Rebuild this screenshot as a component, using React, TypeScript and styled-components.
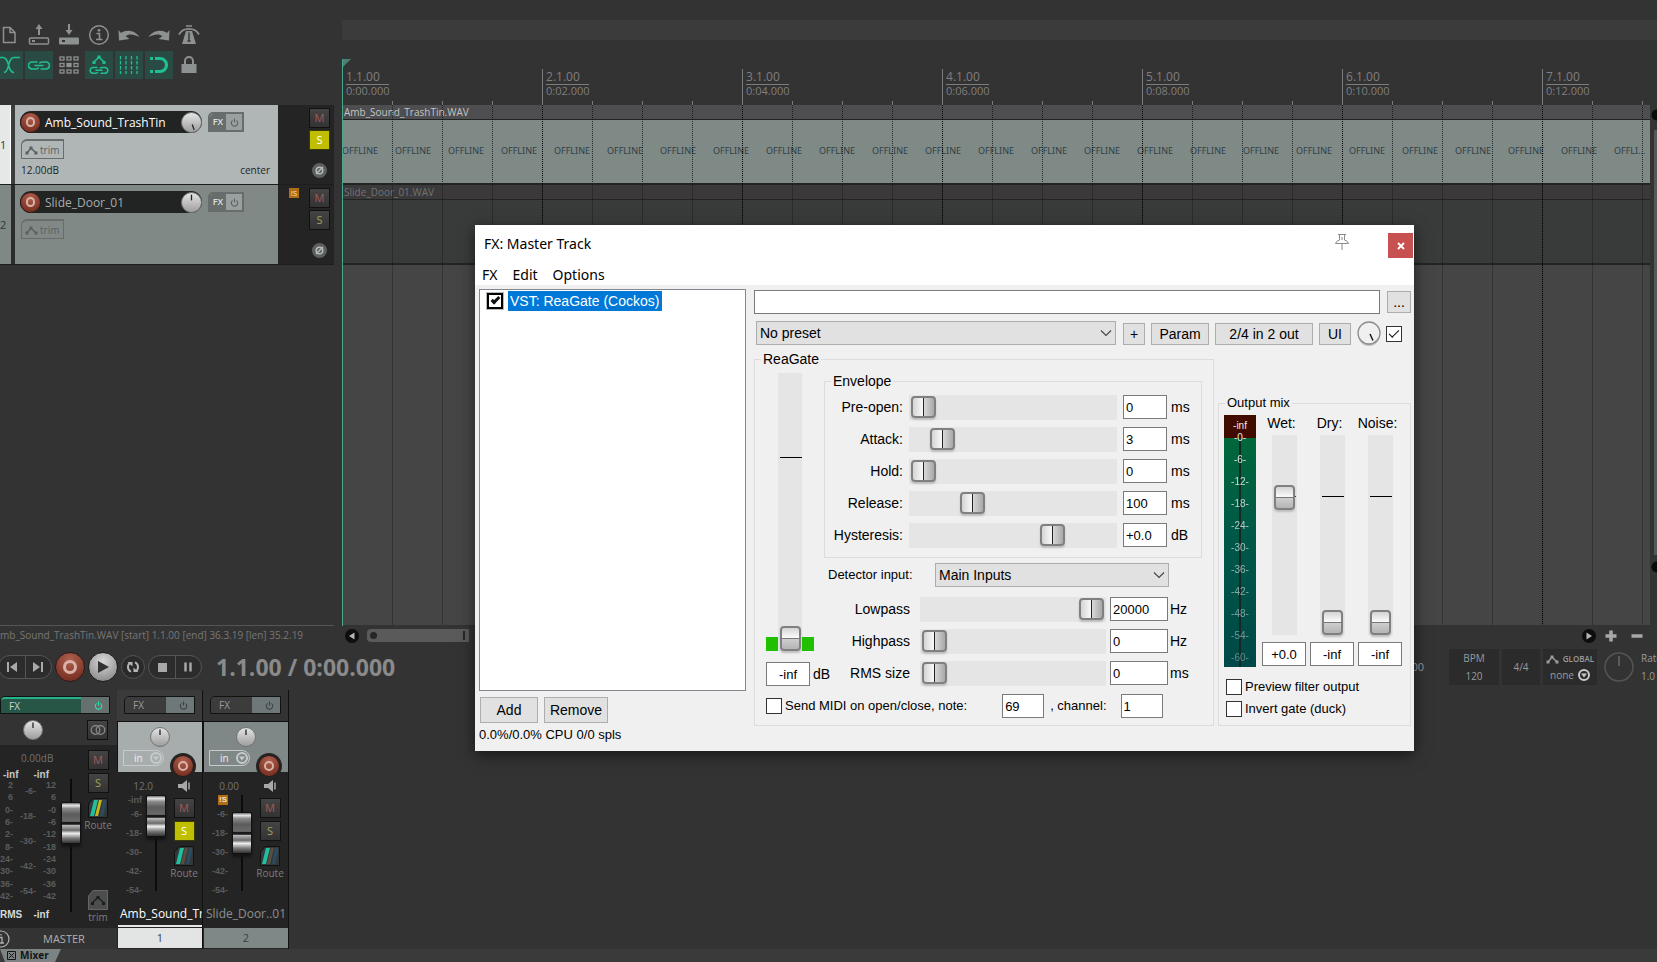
import React from "react";
import styled, { createGlobalStyle, css } from "styled-components";

const GlobalStyle = createGlobalStyle`
  *, *::before, *::after { box-sizing: border-box; }
  html, body { margin: 0; background: #333333; }
  body { font-family: "Open Sans", "Noto Sans", sans-serif; overflow: hidden; }
  button, input, select { font: inherit; margin: 0; padding: 0; border-radius: 0; }
  h1, h2, p, fieldset { margin: 0; }
  svg { display: block; }
`;

/* ---------- page frame ---------- */

const Page = styled.div`
  display: flex;
  flex-direction: column;
  min-height: 100vh;
  overflow: hidden;
  background: #333333;
  color: #8c8c8c;
`;

const Upper = styled.main`
  display: flex;
  flex: 1;
`;

const TrackColumn = styled.section`
  display: flex;
  flex-direction: column;
  width: 334px;
  flex-shrink: 0;
`;

const Toolbar = styled.div`
  display: grid;
  grid-template-columns: repeat(7, 28px);
  gap: 2px;
  padding: 21px 0 26px;
  margin-left: -5px;
`;

const ToolButton = styled.button<{ $on?: boolean }>`
  display: grid;
  place-items: center;
  width: 28px;
  height: 28px;
  border: 0;
  background: ${(p) => (p.$on ? "#2a4b43" : "transparent")};
  color: ${(p) => (p.$on ? "#1fbf93" : "#8e9191")};
`;

/* ---------- track panels ---------- */

const TrackRow = styled.article<{ $selected?: boolean }>`
  display: flex;
  height: 80px;
  border-bottom: 1px solid #1c1e1e;
  background: ${(p) => (p.$selected ? "#a9afae" : "#7f8885")};
  color: ${(p) => (p.$selected ? "#1c1e1e" : "#3b4040")};
`;

const TrackIndex = styled.div<{ $selected?: boolean }>`
  display: flex;
  align-items: center;
  width: 15px;
  font-size: 11px;
  border-right: 4px solid ${(p) => (p.$selected ? "#3c3e3e" : "#2b2d2d")};
  background: ${(p) => (p.$selected ? "#e6e8e7" : "#7f8885")};
  box-shadow: ${(p) => (p.$selected ? "inset -1px 0 #ffffff" : "none")};
  color: #333737;
`;

const TrackBody = styled.div<{ $selected?: boolean }>`
  display: flex;
  flex-direction: column;
  flex: 1;
  gap: 5px;
  padding: 6px 8px 0 5px;
  background: ${(p) => (p.$selected ? "#b0b6b6" : "#808986")};
`;

const TrackLine = styled.div`
  display: flex;
  align-items: center;
  gap: 6px;
  height: 22px;
`;

const NamePill = styled.div<{ $selected?: boolean }>`
  display: flex;
  align-items: center;
  justify-content: space-between;
  width: 182px;
  height: 22px;
  border-radius: 11px;
  background: #222323;
  font-size: 12px;
  color: ${(p) => (p.$selected ? "#ffffff" : "#a9adac")};
`;

const NameText = styled.span`
  flex: 1;
  padding-left: 4px;
  white-space: nowrap;
`;

const RoundRecord = styled.button<{ $size: number }>`
  display: grid;
  place-items: center;
  flex-shrink: 0;
  width: ${(p) => p.$size}px;
  height: ${(p) => p.$size}px;
  border: 1px solid #2b1b18;
  border-radius: 50%;
  background: radial-gradient(circle at 50% 25%, #b0604e, #7c3325 75%);
  &::after {
    content: "";
    width: 50%;
    height: 50%;
    border: ${(p) => (p.$size > 25 ? 3 : 2)}px solid #d9b3a8;
    border-radius: 50%;
  }
`;

const SplitFx = styled.div<{ $mixer?: boolean }>`
  display: flex;
  height: ${(p) => (p.$mixer ? 18 : 20)}px;
  border: ${(p) => (p.$mixer ? 1 : 2)}px solid ${(p) => (p.$mixer ? "#111212" : "#666d6c")};
  border-top-left-radius: 5px;
`;

const FxButton = styled.button<{ $tone: "light" | "dark" | "green" }>`
  flex: 1;
  border: 0;
  border-top-left-radius: 4px;
  font-size: 10px;
  line-height: 14px;
  ${(p) => p.$tone === "light" && css`background: #666d6c; color: #dfe2e1; font-weight: 600; font-size: 9px;`}
  ${(p) => p.$tone === "dark" && css`background: #3c3c3c; color: #9a9a9a; text-align: left; padding-left: 8px;`}
  ${(p) => p.$tone === "green" && css`background: #275647; color: #c4d8d0; text-align: left; padding-left: 8px; border-top: 2px solid #25b189;`}
`;

const PowerButton = styled.button<{ $tone: "light" | "dark" | "green" }>`
  display: grid;
  place-items: center;
  border: 0;
  width: ${(p) => (p.$tone === "light" ? 16 : 28)}px;
  padding-left: ${(p) => (p.$tone === "light" ? 0 : 7)}px;
  background: ${(p) => (p.$tone === "light" ? "#9aa09f" : p.$tone === "dark" ? "#6f7878" : "#66706e")};
  color: ${(p) => (p.$tone === "light" ? "#5c6362" : p.$tone === "dark" ? "#3c4242" : "#2be0ae")};
`;

const TrimButton = styled.button`
  display: flex;
  align-items: center;
  gap: 2px;
  height: 20px;
  padding: 0 4px 0 3px;
  margin-left: 1px;
  border: 1px solid #666d6c;
  border-top-width: 2px;
  border-top-left-radius: 6px;
  background: transparent;
  color: #5b6160;
  font-size: 10px;
  line-height: 16px;
`;

const TrackReadout = styled.div`
  display: flex;
  justify-content: space-between;
  padding-left: 1px;
  margin-top: -2px;
  font-size: 10px;
  line-height: 14px;
  color: #222525;
`;

const TrackSide = styled.div`
  display: flex;
  justify-content: flex-end;
  gap: 10px;
  width: 56px;
  padding: 3px 4px 0 0;
  background: #242424;
`;

const SideStack = styled.div`
  display: flex;
  flex-direction: column;
  align-items: center;
  gap: 2px;
`;

const MiniButton = styled.button<{ $kind: "mute" | "solo" | "soloOn" | "plain" }>`
  display: grid;
  place-items: center;
  width: 21px;
  height: 20px;
  border: 1px solid #111111;
  font-size: 11px;
  line-height: 14px;
  background: linear-gradient(#444444, #333333);
  color: #8d8d8d;
  ${(p) => p.$kind === "mute" && css`color: #a05a5a;`}
  ${(p) => p.$kind === "solo" && css`color: #9fa15a;`}
  ${(p) => p.$kind === "soloOn" && css`background: #bfbf00; color: #ffffff; border-color: #3a3a08;`}
`;

const PhaseButton = styled.button`
  display: grid;
  place-items: center;
  width: 15px;
  height: 15px;
  margin-top: 11px;
  border: 0;
  border-radius: 50%;
  background: #5d5f5f;
  color: #b9bcbc;
`;

const SoloBadge = styled.span`
  width: 10px;
  height: 10px;
  background: #b06c14;
  color: #f5e3c8;
  font-size: 8px;
  line-height: 10px;
  text-align: center;
`;

const StatusLine = styled.p`
  margin-top: auto;
  height: 21px;
  border-top: 1px solid #555555;
  font-size: 10px;
  line-height: 19px;
  white-space: nowrap;
  color: #777777;
`;

/* ---------- arrange view ---------- */

const ArrangeColumn = styled.section`
  position: relative;
  display: flex;
  flex-direction: column;
  flex: 1;
  min-width: 0;
  margin-left: 8px;
  padding-top: 20px;
`;

const RegionBar = styled.div`
  height: 20px;
  background: #3b3b3b;
`;

const Ruler = styled.div`
  display: flex;
  overflow: hidden;
  height: 65px;
  padding-top: 29px;
  background: repeating-linear-gradient(90deg, #7c7c7c 0 1px, transparent 1px 50px) bottom / 100% 4px no-repeat;
`;

const RulerCell = styled.div`
  flex: 0 0 200px;
  padding: 1px 0 0 3px;
  border-left: 1px solid #7c7c7c;
  color: #7f7f7f;
`;

const BarLabel = styled.div`
  width: 43px;
  border-bottom: 1px solid #7c7c7c;
  font-size: 12px;
  line-height: 14px;
`;

const TimeLabel = styled.div`
  font-size: 11px;
  line-height: 11px;
`;

const ArrangeRow = styled.div`
  display: flex;
  flex: 1;
`;

const Canvas = styled.div`
  position: relative;
  flex: 1;
  min-width: 0;
  overflow: hidden;
  background: #454545;
`;

const dotted = css`
  mask-image: repeating-linear-gradient(#000 0 1px, transparent 1px 2px);
`;

const BeatLines = styled.div<{ $dotted?: boolean }>`
  position: absolute;
  inset: ${(p) => (p.$dotted ? "0 0 auto" : "80px 0 0")};
  height: ${(p) => (p.$dotted ? "78px" : "auto")};
  pointer-events: none;
  background: repeating-linear-gradient(90deg, ${(p) => (p.$dotted ? "rgba(10, 14, 14, 0.75)" : "rgba(10, 14, 14, 0.32)")} 0 1px, transparent 1px 50px);
  ${(p) => p.$dotted && dotted}
`;

const BarLines = styled.div`
  position: absolute;
  inset: 0;
  pointer-events: none;
  background: repeating-linear-gradient(90deg, #050505 0 1px, transparent 1px 200px);
  ${dotted}
`;

const Clip = styled.div<{ $muted?: boolean }>`
  height: 80px;
  border-bottom: 2px solid #222424;
  background: ${(p) => (p.$muted ? "#383b3a" : "#7f8986")};
  color: ${(p) => (p.$muted ? "#717373" : "#c3c5c5")};
`;

const ClipTitle = styled.div<{ $muted?: boolean }>`
  height: 15px;
  padding-left: 2px;
  border-bottom: 1px solid #222424;
  background: ${(p) => (p.$muted ? "#3b393a" : "#4e4d4f")};
  font-size: 10px;
  line-height: 14px;
`;

const OfflineRow = styled.div`
  display: flex;
  height: 60px;
  align-items: center;
  font-family: "Noto Sans", sans-serif;
  font-size: 9px;
  color: #2f4045;
`;

const OfflineCell = styled.span`
  flex: 0 0 53px;
`;

const PlayCursor = styled.div`
  position: absolute;
  left: 0;
  top: 59px;
  bottom: 20px;
  border-left: 1px solid #48a890;
  &::before {
    content: "";
    position: absolute;
    left: 0;
    top: 0;
    border-top: 8px solid #4c7f73;
    border-right: 8px solid transparent;
  }
`;

const VScroll = styled.div`
  width: 7px;
  padding: 25px 0 70px 4px;
  background:
    radial-gradient(circle at 7px 10px, #0a0a0a 5px, transparent 6px),
    radial-gradient(circle at 7px calc(100% - 58px), #0a0a0a 5px, transparent 6px),
    #333333;
  &::before {
    content: "";
    display: block;
    height: 100%;
    background: #575757;
  }
`;

const HScroll = styled.div`
  display: flex;
  align-items: center;
  gap: 8px;
  height: 21px;
  padding: 0 13px 0 3px;
  color: #a8a8a8;
`;

const ScrollButton = styled.button`
  display: grid;
  place-items: center;
  width: 14px;
  height: 14px;
  border: 0;
  border-radius: 50%;
  background: #0d0d0d;
  color: #b5b5b5;
`;

const PlainButton = styled.button<{ $apart?: boolean }>`
  display: grid;
  place-items: center;
  width: 14px;
  height: 14px;
  margin-left: ${(p) => (p.$apart ? 4 : 0)}px;
  border: 0;
  background: transparent;
  color: #a8a8a8;
`;

const ScrollThumb = styled.div`
  display: flex;
  align-items: center;
  justify-content: space-between;
  width: 102px;
  height: 13px;
  margin-right: auto;
  padding: 0 4px 0 3px;
  border-radius: 4px 0 0 4px;
  background: #5a5a5a;
  &::before { content: ""; width: 7px; height: 7px; border-radius: 50%; background: #262626; }
  &::after { content: ""; width: 2px; height: 9px; background: #262626; }
`;

/* ---------- transport ---------- */

const Transport = styled.section`
  display: flex;
  align-items: center;
  gap: 3px;
  height: 44px;
  padding-bottom: 3px;
`;

const Pill = styled.div<{ $cut?: boolean }>`
  display: flex;
  height: 24px;
  width: 54px;
  margin-left: ${(p) => (p.$cut ? -2 : 0)}px;
  border: 1px solid #555555;
  border-radius: 12px;
  background: #2c2c2c;
`;

const PillButton = styled.button`
  display: grid;
  place-items: center;
  flex: 1;
  border: 0;
  background: transparent;
  color: #a9a9a9;
  & + & { border-left: 1px solid #555555; }
`;

const PlayButton = styled.button`
  display: grid;
  place-items: center;
  width: 30px;
  height: 30px;
  border: 1px solid #1d1d1d;
  border-radius: 50%;
  background: radial-gradient(circle at 50% 30%, #d9d9d9, #8f8f8f 80%);
  color: #333333;
`;

const LoopButton = styled.button`
  display: grid;
  place-items: center;
  width: 24px;
  height: 24px;
  border: 1px solid #555555;
  border-radius: 50%;
  background: #2a2a2a;
  color: #b5b5b5;
`;

const TimeDisplay = styled.output`
  margin-left: 11px;
  font-size: 23px;
  font-weight: 700;
  line-height: 30px;
  white-space: nowrap;
  color: #8a8a8a;
`;

const TransportEnd = styled.div`
  display: flex;
  align-items: center;
  gap: 3px;
  margin-left: auto;
  font-size: 11px;
  line-height: 18px;
  color: #9a9a9a;
`;

const InfoBox = styled.div<{ $width: number }>`
  display: flex;
  flex-direction: column;
  align-items: center;
  justify-content: center;
  width: ${(p) => p.$width}px;
  height: 36px;
  background: #2b2b2b;
  font-size: 10px;
`;

const Inline = styled.span`
  display: flex;
  align-items: center;
  gap: 4px;
  line-height: 16px;
  white-space: nowrap;
`;

const GlobalLabel = styled.span`
  font-size: 8px;
  font-weight: 600;
`;

const RateKnob = styled.div`
  display: grid;
  place-items: center;
  width: 38px;
`;

const RateText = styled.div`
  display: flex;
  flex-direction: column;
  width: 16px;
  overflow: hidden;
  font-size: 10px;
`;

const ClippedLabel = styled.span`
  margin-right: 22px;
`;

/* ---------- mixer ---------- */

const Mixer = styled.section`
  display: flex;
  height: 259px;
`;

const Strip = styled.article<{ $wide?: boolean }>`
  display: flex;
  flex-direction: column;
  width: ${(p) => (p.$wide ? 117 : 86)}px;
  background: #242424;
  border-right: ${(p) => (p.$wide ? 0 : 1)}px solid #111111;
`;

const StripTop = styled.div<{ $master?: boolean; $selected?: boolean }>`
  height: 31px;
  padding: 6px 7px 0 ${(p) => (p.$master ? 0 : 7)}px;
  background: ${(p) => (p.$selected ? "#3b3b3b" : "#333333")};
`;

const StripHead = styled.div<{ $selected?: boolean }>`
  position: relative;
  display: flex;
  flex-direction: column;
  align-items: center;
  gap: 3px;
  height: 51px;
  padding: 5px 5px 0;
  border-top: 1px solid #111111;
  border-left: 1px solid #111111;
  background: ${(p) => (p.$selected ? "#a7adad" : "#7f8886")};
`;

const InputPick = styled.button`
  display: flex;
  align-items: center;
  justify-content: space-between;
  align-self: flex-start;
  width: 41px;
  height: 16px;
  padding: 0 1px 0 10px;
  border: 1px solid #c6caca;
  border-radius: 0 8px 8px 0;
  background: transparent;
  font-size: 10px;
  line-height: 13px;
  color: #eef0f0;
`;

const ArmSeat = styled.div`
  position: absolute;
  right: 6px;
  bottom: -7px;
  width: 26px;
  height: 26px;
  padding: 2px;
  border-radius: 50%;
  background: #242424;
`;

const StripMain = styled.div`
  display: grid;
  grid-template-columns: 29px 28px 20px;
  flex: 1;
  padding-top: 5px;
`;

const ScaleColumn = styled.div`
  display: flex;
  flex-direction: column;
  align-items: flex-end;
  padding-right: 4px;
  font-family: "Liberation Sans", sans-serif;
  font-size: 9px;
  font-weight: 700;
  line-height: 19px;
  color: #5a5c5c;
`;

const Volume = styled.span`
  width: 36px;
  margin-right: -11px;
  font-family: "Open Sans", sans-serif;
  font-size: 10px;
  font-weight: 400;
  line-height: 18px;
  text-align: right;
  color: #707272;
`;

const ScaleTop = styled.span`
  display: flex;
  align-items: center;
  height: 10px;
  line-height: 10px;
`;

const FaderColumn = styled.div`
  display: flex;
  padding-top: 18px;
`;

const Fader = styled.input<{ $length: number }>`
  appearance: none;
  writing-mode: vertical-lr;
  direction: rtl;
  width: 20px;
  height: ${(p) => p.$length}px;
  background: linear-gradient(90deg, transparent 9px, #0b0b0b 9px 11px, transparent 11px);
  &::-webkit-slider-thumb {
    appearance: none;
    width: 20px;
    height: 42px;
    border: 1px solid #111111;
    border-radius: 2px;
    background: linear-gradient(#707070, #e4e4e4 6%, #8a8a8a 14%, #5c5c5c 28%, #6a6a6a 46%, #191919 48% 53%, #b8b8b8 56%, #6a6a6a 68%, #efefef 76%, #7a7a7a 88%, #333333);
    box-shadow: 0 3px 3px #141414;
  }
`;

const ButtonColumn = styled.div`
  display: flex;
  flex-direction: column;
  align-items: center;
  gap: 3px;
  font-size: 10px;
  line-height: 8px;
  color: #7c7e7e;
`;

const Speaker = styled.span`
  display: grid;
  place-items: center;
  height: 18px;
  color: #a8a8a8;
`;

const IconButton = styled.button`
  display: grid;
  place-items: center;
  width: 20px;
  height: 20px;
  margin-top: 2px;
  border: 0;
  background: transparent;
`;

const StripName = styled.div<{ $selected?: boolean }>`
  height: 25px;
  margin: 0 0 0 1px;
  padding-left: 2px;
  overflow: hidden;
  white-space: nowrap;
  font-size: 12px;
  line-height: 24px;
  border-bottom: 2px solid ${(p) => (p.$selected ? "#e6e8e7" : "#242424")};
  color: ${(p) => (p.$selected ? "#ffffff" : "#8d9090")};
`;

const StripNumber = styled.div<{ $selected?: boolean }>`
  height: 20px;
  margin: 1px 0 1px 1px;
  font-size: 11px;
  line-height: 20px;
  text-align: center;
  background: ${(p) => (p.$selected ? "#e3e5e4" : "#7f8886")};
  color: #3c4040;
`;

const MasterPan = styled.div`
  display: flex;
  align-items: center;
  justify-content: space-between;
  height: 24px;
  padding: 0 9px 6px 23px;
  background: #333333;
`;

const MasterMain = styled.div`
  display: flex;
  flex: 1;
  justify-content: space-between;
  padding: 4px 7px 0 0;
`;

const MasterMeters = styled.div`
  width: 56px;
  font-family: "Liberation Sans", sans-serif;
  font-size: 9px;
  font-weight: 700;
  color: #5a5c5c;
`;

const MasterVolume = styled.div`
  padding-left: 21px;
  font-family: "Open Sans", sans-serif;
  font-size: 10px;
  font-weight: 400;
  line-height: 18px;
  color: #707272;
`;

const PeakRow = styled.div`
  display: flex;
  justify-content: space-between;
  height: 12px;
  padding: 0 7px 0 3px;
  font-size: 10px;
  line-height: 15px;
  color: #c6c6c6;
`;

const MeterGrid = styled.div`
  display: flex;
  justify-content: space-between;
`;

const MeterScale = styled.div<{ $step: number }>`
  display: flex;
  flex-direction: column;
  align-items: flex-end;
  justify-content: space-between;
  height: 123px;
  line-height: ${(p) => p.$step}px;
`;

const MasterFader = styled.div`
  padding: 30px 0 0;
`;

const MasterFoot = styled.div`
  display: flex;
  align-items: center;
  gap: 32px;
  height: 21px;
  background: #333333;
  font-size: 11px;
  line-height: 20px;
  color: #b0b0b0;
`;

const RmsRow = styled.div`
  display: flex;
  justify-content: space-between;
  padding: 6px 7px 0 0;
  font-size: 10px;
  line-height: 14px;
  color: #d8d8d8;
`;

const TabBar = styled.nav`
  display: flex;
  height: 13px;
  background: #3a3a3a;
`;

const MixerTab = styled.button`
  display: flex;
  align-items: center;
  gap: 4px;
  width: 61px;
  padding-left: 7px;
  border: 0;
  background: #7b8482;
  clip-path: polygon(0 0, 100% 0, 55px 100%, 5px 100%);
  font-size: 10px;
  font-weight: 700;
  line-height: 13px;
  color: #151515;
`;

/* ---------- effects window ---------- */

const Window = styled.section`
  position: absolute;
  left: 475px;
  top: 225px;
  display: flex;
  flex-direction: column;
  width: 939px;
  height: 526px;
  background: #f0f0f0;
  box-shadow: 0 4px 14px rgba(0, 0, 0, 0.55);
  font-family: "Liberation Sans", Arial, sans-serif;
  font-size: 14px;
  line-height: 16px;
  color: #000000;
`;

const TitleBar = styled.header`
  display: flex;
  height: 36px;
  padding: 0 1px 0 9px;
  background: #ffffff;
  font-family: "Noto Sans", sans-serif;
`;

const WindowTitle = styled.h1`
  flex: 1;
  font-size: 14px;
  font-weight: 400;
  line-height: 38px;
`;

const PinButton = styled.button`
  width: 16px;
  height: 18px;
  margin: 8px 38px 0 0;
  border: 0;
  background: transparent;
  color: #8a8a8a;
`;

const CloseButton = styled.button`
  display: grid;
  place-items: center;
  width: 25px;
  height: 25px;
  margin-top: 8px;
  border: 0;
  background: #c75050;
  color: #ffffff;
`;

const MenuBar = styled.nav`
  display: flex;
  gap: 15px;
  height: 24px;
  padding-left: 7px;
  background: #ffffff;
  font-family: "Noto Sans", sans-serif;
  font-size: 14px;
`;

const MenuItem = styled.button`
  height: 28px;
  border: 0;
  background: transparent;
  color: #000000;
`;

const WindowBody = styled.div`
  display: flex;
  gap: 8px;
  flex: 1;
  padding: 4px 3px 0 4px;
`;

const ChainColumn = styled.div`
  display: flex;
  flex-direction: column;
  width: 267px;
`;

const ChainList = styled.ul`
  height: 402px;
  margin: 0;
  padding: 1px 7px;
  border: 1px solid #828790;
  background: #ffffff;
  list-style: none;
`;

const ChainItem = styled.li`
  display: flex;
  align-items: center;
  gap: 5px;
`;

const ChainName = styled.label`
  padding: 0 3px 0 2px;
  background: #0078d7;
  line-height: 20px;
  color: #ffffff;
`;

const Small = styled.p`
  font-size: 13px;
`;

const Tick = styled.input<{ $heavy?: boolean }>`
  appearance: none;
  flex-shrink: 0;
  width: 16px;
  height: 16px;
  border: ${(p) => (p.$heavy ? 2 : 1)}px solid ${(p) => (p.$heavy ? "#000000" : "#333333")};
  outline: ${(p) => (p.$heavy ? "1px solid #b8b8b8" : "none")};
  background: #ffffff;
  &:checked::after {
    content: "";
    display: block;
    width: ${(p) => (p.$heavy ? 9 : 10)}px;
    height: 5px;
    margin: ${(p) => (p.$heavy ? "2px 0 0 2px" : "3px 0 0 2px")};
    border-left: ${(p) => (p.$heavy ? 3 : 1)}px solid #111111;
    border-bottom: ${(p) => (p.$heavy ? 3 : 1)}px solid #111111;
    transform: rotate(-45deg);
  }
`;

const ButtonRow = styled.div`
  display: flex;
  gap: 6px;
  padding: 6px 0 4px 1px;
`;

const PushButton = styled.button<{ $width: number; $tall?: boolean }>`
  width: ${(p) => p.$width}px;
  height: ${(p) => (p.$tall ? 26 : 22)}px;
  flex-shrink: 0;
  border: 1px solid #adadad;
  background: #e1e1e1;
  color: #000000;
  white-space: nowrap;
`;

const EffectColumn = styled.div`
  display: flex;
  flex-direction: column;
  flex: 1;
  padding-top: 1px;
`;

const CommentRow = styled.div`
  display: flex;
  align-items: center;
  gap: 7px;
  margin-bottom: 7px;
`;

const PresetRow = styled.div`
  display: flex;
  align-items: flex-end;
  gap: 6px;
  padding-left: 2px;
  height: 24px;
`;

const Field = styled.input<{ $width?: number; $centered?: boolean }>`
  width: ${(p) => (p.$width ? p.$width + "px" : "auto")};
  flex: ${(p) => (p.$width ? "none" : "1")};
  height: 24px;
  padding: ${(p) => (p.$centered ? "0" : "0 2px")};
  border: 1px solid #7a7a7a;
  background: #ffffff;
  font-size: 13px;
  text-align: ${(p) => (p.$centered ? "center" : "left")};
  color: #000000;
`;

const SelectBox = styled.div<{ $width: number }>`
  display: grid;
  width: ${(p) => p.$width}px;
  height: 24px;
  align-items: center;
  & > * { grid-area: 1 / 1; }
  & > svg { justify-self: end; margin-right: 4px; pointer-events: none; }
`;

const Select = styled.select`
  appearance: none;
  width: 100%;
  height: 24px;
  padding-left: 3px;
  border: 1px solid #adadad;
  background: #e1e1e1;
  color: #000000;
`;

const PresetButtons = styled.div`
  display: flex;
  gap: 6px;
  padding-left: 1px;
`;

const PresetEnd = styled.div`
  display: flex;
  align-items: center;
  gap: 5px;
  & > svg { overflow: visible; }
  & > ${Tick} { margin-top: 2px; }
`;

const Groups = styled.div`
  display: flex;
  align-items: flex-end;
  gap: 4px;
  padding-top: 6px;
`;

const Group = styled.fieldset<{ $width: number; $height: number }>`
  width: ${(p) => p.$width}px;
  height: ${(p) => p.$height}px;
  min-width: 0;
  padding: 0;
  border: 1px solid #dcdcdc;
`;

const Legend = styled.legend<{ $small?: boolean }>`
  margin-left: 6px;
  padding: 0 2px;
  font-size: ${(p) => (p.$small ? 13 : 14)}px;
  line-height: 16px;
`;

const GateTop = styled.div`
  display: flex;
  gap: 10px;
  padding: 6px 0 0 11px;
`;

const Threshold = styled.div`
  display: flex;
  flex-direction: column;
  gap: 11px;
  width: 48px;
`;

const ThresholdMeter = styled.div`
  display: flex;
  align-items: flex-end;
`;

const GreenLamp = styled.div`
  flex: 1;
  height: 14px;
  background: #1fc000;
`;

const Unit = styled.span`
  white-space: nowrap;
`;

const UnitRow = styled.div`
  display: flex;
  align-items: center;
  gap: 3px;
`;

const GateControls = styled.div`
  display: flex;
  flex-direction: column;
  flex: 1;
`;

const ParamRow = styled.div<{ $filter?: boolean }>`
  display: grid;
  grid-template-columns: ${(p) => (p.$filter ? "92px 186px 58px 1fr" : "78px 208px 44px 1fr")};
  column-gap: ${(p) => (p.$filter ? 4 : 6)}px;
  align-items: center;
  height: 32px;
  & > label {
    padding-right: ${(p) => (p.$filter ? 6 : 0)}px;
    text-align: right;
  }
  & > ${Unit} { margin-left: -2px; }
`;

const EnvelopeRows = styled.div`
  padding-top: 2px;
`;

const DetectorRow = styled.div`
  display: flex;
  justify-content: space-between;
  align-items: center;
  padding: 5px 44px 6px 4px;
  & > label { font-size: 13px; }
`;

const MidiRow = styled.div`
  display: flex;
  align-items: center;
  padding: 5px 0 0 11px;
  font-size: 13px;
`;

const TickLabel = styled.label`
  display: flex;
  align-items: center;
  gap: 3px;
  font-size: 13px;
  white-space: nowrap;
`;

const MidiNote = styled.div`
  display: flex;
  align-items: center;
  gap: 6px;
  margin-left: 35px;
`;

const MidiChannel = styled.div`
  display: flex;
  align-items: center;
  gap: 14px;
`;

const thumbFace = css`
  appearance: none;
  border: 2px solid #808080;
  border-radius: 4px;
  box-shadow: 0 2px 2px #bdbdbd;
`;

const HSlider = styled.input`
  appearance: none;
  width: 100%;
  height: 25px;
  padding: 0 2px;
  background: #e5e5e5;
  &::-webkit-slider-thumb {
    ${thumbFace}
    width: 25px;
    height: 22px;
    background: linear-gradient(90deg, #d4d4d4, #f6f6f6 9px, #f6f6f6 10px, #222222 10px 11px, #d8d8d8 11px, #a8a8a8);
  }
`;

const VSlider = styled.input<{ $length: number; $mark: number; $wide: number }>`
  appearance: none;
  writing-mode: vertical-lr;
  direction: rtl;
  width: ${(p) => p.$wide}px;
  height: ${(p) => p.$length}px;
  background:
    linear-gradient(#000000, #000000) 2px ${(p) => p.$mark}px / 22px 1px no-repeat,
    #e5e5e5;
  &::-webkit-slider-thumb {
    ${thumbFace}
    width: 21px;
    height: 25px;
    background: linear-gradient(#d4d4d4, #f8f8f8 9px, #f8f8f8 10px, #777777 10px 11px, #cfcfcf 11px, #b4b4b4);
  }
`;

const MixBody = styled.div`
  display: flex;
  gap: 6px;
  padding: 4px 5px 0;
`;

const OutputMeter = styled.div`
  display: flex;
  flex-direction: column;
  width: 32px;
  height: 252px;
  background:
    linear-gradient(#132a22, #132a22) 50% 100% / 2px 229px no-repeat,
    linear-gradient(#420b00 23px, #00683a 23px, #005848 120px, #004848);
  font-size: 10px;
  line-height: 22px;
  text-align: center;
  color: #e8e8e8;
`;

const MeterPeak = styled.span`
  height: 12px;
`;

const MeterMark = styled.span<{ $fade: number }>`
  display: flex;
  justify-content: center;
  flex: 1;
  opacity: ${(p) => p.$fade};
`;

const MixSlider = styled.div`
  display: flex;
  flex-direction: column;
  align-items: center;
  width: 44px;
  white-space: nowrap;
  & > label {
    margin-bottom: 4px;
    padding-right: 5px;
    font-size: 14px;
  }
  & > ${Field} { margin-top: 7px; }
`;

const MixSliders = styled.div`
  display: flex;
  gap: 4px;
`;

const MixChecks = styled.div`
  display: flex;
  flex-direction: column;
  gap: 6px;
  padding: 12px 0 0 7px;
`;

/* ---------- drawings ---------- */

const Icon = ({ children, size = 22, w, h, box }: { children: React.ReactNode; size?: number; w?: number; h?: number; box?: string }) => (
  <svg width={w ?? size} height={h ?? size} viewBox={box ?? `0 0 ${w ?? size} ${h ?? size}`} fill="none" stroke="currentColor" strokeWidth="1.5" aria-hidden="true">
    {children}
  </svg>
);

const EnvelopePath = () => (
  <>
    <path d="M2 9 L6 4 L9 7 L11 9" />
    <rect x="0.5" y="7.5" width="3" height="3" fill="currentColor" stroke="none" />
    <rect x="4.5" y="2.5" width="3" height="3" fill="currentColor" stroke="none" />
    <rect x="9.5" y="7.5" width="3" height="3" fill="currentColor" stroke="none" />
  </>
);

const Knob = ({ r, angle = 0, id }: { r: number; angle?: number; id: string }) => (
  <svg width={r * 2} height={r * 2} viewBox={`${-r} ${-r} ${2 * r} ${2 * r}`} aria-hidden="true">
    <defs>
      <linearGradient id={id} x1="0" y1="0" x2="0" y2="1">
        <stop offset="0" stopColor="#e6e6e6" />
        <stop offset="1" stopColor="#9c9c9c" />
      </linearGradient>
    </defs>
    <circle r={r - 0.5} fill={`url(#${id})`} stroke="#6f7373" />
    <path d={`M0 ${-r * 0.2} V${-r * 0.75}`} stroke="#222" strokeWidth="1.3" transform={`rotate(${angle})`} />
  </svg>
);

const PowerIcon = () => (
  <Icon size={9}>
    <path d="M2.6 2.4 A3.2 3.2 0 1 0 6.4 2.4 M4.5 0.5 V4.5" strokeWidth="1.1" />
  </Icon>
);

const RouteIcon = ({ vivid }: { vivid?: boolean }) => (
  <svg width="20" height="20" viewBox="0 0 20 20" aria-hidden="true">
    <path d="M5 0.5 H19.5 V19.5 H0.5 V6 Z" fill="#33393b" stroke="#111" />
    <path d="M6 2 H10 L6 18 H2 Z" fill="#1fbfa0" />
    <path d="M11 2 H14 L10 18 H7 Z" fill={vivid ? "#cdb415" : "#5d4d3c"} />
    <path d="M15 2 H18 V6 L15 18 H12 Z" fill="#2c4a60" />
  </svg>
);

const SpeakerIcon = () => (
  <Icon size={12}>
    <path d="M0 4 H4 L9 0 V12 L4 8 H0 Z" fill="currentColor" stroke="none" />
    <path d="M11 2.5 V9.5" />
  </Icon>
);

const DropIcon = () => (
  <svg width="12" height="12" viewBox="0 0 12 12" aria-hidden="true">
    <circle cx="6" cy="6" r="5" fill="none" stroke="#c6caca" strokeWidth="2" />
    <path d="M3 4.5 H9 L6 8.5 Z" fill="#c6caca" />
  </svg>
);

const ChevronDown = () => (
  <Icon w={12} h={8}>
    <path d="M1 1.5 L6 6.5 L11 1.5" strokeWidth="1.1" stroke="#444" />
  </Icon>
);

const tools: { name: string; on?: boolean; art: React.ReactNode }[] = [
  { name: "New project", art: <path d="M5.5 3.5 H12 L17 8.5 V18.5 H5.5 Z M12 3.5 V8.5 H17" /> },
  { name: "Open project", art: <><path d="M11 11 V3" strokeWidth="2" /><path d="M7.5 5 L11 0 L14.5 5 Z" fill="currentColor" stroke="none" /><rect x="1.5" y="14" width="19" height="6" rx="1" /><rect x="4" y="16" width="3" height="2" fill="currentColor" stroke="none" /></> },
  { name: "Save project", art: <><path d="M11 0 V8" strokeWidth="2" /><path d="M7.5 6 L11 11 L14.5 6 Z" fill="currentColor" stroke="none" /><rect x="1" y="13.5" width="20" height="7" rx="1" fill="currentColor" stroke="none" /><rect x="4" y="16" width="3" height="2" fill="#333" stroke="none" /></> },
  { name: "Project settings", art: <><circle cx="11" cy="11" r="9.3" /><path d="M8.5 9.5 H11.5 V15.5 M8 15.5 H14.5" strokeWidth="1.6" /><circle cx="11" cy="6.3" r="1.4" fill="currentColor" stroke="none" /></> },
  { name: "Undo", art: <path d="M0.5 6 L3 9 C8 5 17 6 21.5 13 C16 10 11 9.5 7.5 12 L11.5 15 L1 16.5 Z" fill="currentColor" stroke="none" /> },
  { name: "Redo", art: <path d="M21.5 6 L19 9 C14 5 5 6 0.5 13 C6 10 11 9.5 14.5 12 L10.5 15 L21 16.5 Z" fill="currentColor" stroke="none" /> },
  { name: "Metronome", art: <><path d="M8 7 H14 L18 20 H4 Z" fill="currentColor" stroke="none" /><path d="M11 8.5 V17 M9.5 17 H12.5" stroke="#333" strokeWidth="1.4" /><path d="M1 10.5 C5 3 17 3 21 10.5 M8 2 H14" strokeWidth="1.7" /></> },
  { name: "Auto crossfade", on: true, art: <path d="M0 3.5 H5 C12 3.5 9 18.5 16 18.5 M22 3.5 H16 C9 3.5 12 18.5 6 18.5" /> },
  { name: "Item grouping", on: true, art: <path d="M9.5 8 H4 A3.5 3.5 0 0 0 4 15 H8 Q10 15 10.5 13.5 M12.5 15 H18 A3.5 3.5 0 0 0 18 8 H14 Q12 8 11.5 9.5 M6.5 11.5 H15.5" strokeWidth="1.7" /> },
  { name: "Ripple editing", art: <>{[0, 1, 2].map((r) => [0, 1, 2].map((c) => <rect key={`${r}${c}`} x={2 + c * 7} y={3 + r * 6.5} width="4" height="3" fill={r === 1 && c === 1 ? "currentColor" : "none"} strokeWidth="1.3" />))}</> },
  { name: "Move envelope points", on: true, art: <><path d="M6 8 L11 3 L16 8" /><path d="M4.5 7 h3 v3 h-3z M9.5 1.5 h3 v3 h-3z M14.5 7 h3 v3 h-3z" fill="currentColor" stroke="none" /><path d="M9.5 13.5 H5 A2.8 2.8 0 0 0 5 19.2 H8 Q9.5 19 10 18 M12.5 19.2 H17 A2.8 2.8 0 0 0 17 13.5 H14 Q12.500 13.5 12 14.500 M7.5 16.300 H14.5" /></> },
  { name: "Grid lines", on: true, art: <path d="M2.5 2 V20 M8 2 V20 M13.5 2 V20 M19 2 V20" strokeDasharray="3.5 1.5" strokeWidth="1.3" /> },
  { name: "Snap", on: true, art: <><path d="M7 4.5 H12 A6.5 6.5 0 0 1 12 17.5 H7" strokeWidth="3.2" /><path d="M2 3 h3 v3 h-3z M2 16 h3 v3 h-3z" fill="currentColor" stroke="none" /></> },
  { name: "Locking", art: <><rect x="3.5" y="10" width="15" height="9" fill="currentColor" stroke="none" /><path d="M7 10 V7 A4 4 0 0 1 15 7 V10" strokeWidth="2" /></> },
];

/* ---------- parts ---------- */

const Fx = ({ tone, mixer }: { tone: "light" | "dark" | "green"; mixer?: boolean }) => (
  <SplitFx $mixer={mixer}>
    <FxButton $tone={tone}>FX</FxButton>
    <PowerButton $tone={tone} aria-label="Bypass effects"><PowerIcon /></PowerButton>
  </SplitFx>
);

const TrackFxSlot = styled.div`
  width: 36px;
`;

function Track({ n, name, selected }: { n: number; name: string; selected?: boolean }) {
  return (
    <TrackRow $selected={selected}>
      <TrackIndex $selected={selected}>{n}</TrackIndex>
      <TrackBody $selected={selected}>
        <TrackLine>
          <NamePill $selected={selected}>
            <RoundRecord $size={21} aria-label={`Arm ${name}`} />
            <NameText>{name}</NameText>
            <Knob r={10.5} angle={selected ? 160 : 0} id={`tk${n}`} />
          </NamePill>
          <TrackFxSlot><Fx tone="light" /></TrackFxSlot>
        </TrackLine>
        <TrackLine>
          <TrimButton><Icon w={13} h={12}><EnvelopePath /></Icon>trim</TrimButton>
        </TrackLine>
        {selected && <TrackReadout><span>12.00dB</span><span>center</span></TrackReadout>}
      </TrackBody>
      <TrackSide>
        {!selected && <SoloBadge>!S</SoloBadge>}
        <SideStack>
          <MiniButton $kind="mute">M</MiniButton>
          <MiniButton $kind={selected ? "soloOn" : "solo"}>S</MiniButton>
          <PhaseButton aria-label="Phase"><Icon size={11}><circle cx="5.5" cy="5.5" r="3.3" /><path d="M2 9 L9 2" /></Icon></PhaseButton>
        </SideStack>
      </TrackSide>
    </TrackRow>
  );
}

function MixerStrip({ n, name, volume, level, top, selected }: { n: number; name: string; volume: string; level: number; top: React.ReactNode; selected?: boolean }) {
  return (
    <Strip>
      <StripTop $selected={selected}><Fx tone="dark" mixer /></StripTop>
      <StripHead $selected={selected}>
        <Knob r={10} id={`mk${n}`} />
        <InputPick>in<DropIcon /></InputPick>
        <ArmSeat><RoundRecord $size={22} aria-label={`Arm ${name}`} /></ArmSeat>
      </StripHead>
      <StripMain>
        <ScaleColumn>
          <Volume>{volume}</Volume>
          <ScaleTop>{top}</ScaleTop>
          {["-6-", "-18-", "-30-", "-42-", "-54-"].map((t) => <span key={t}>{t}</span>)}
        </ScaleColumn>
        <FaderColumn><Fader $length={96} type="range" defaultValue={level} aria-label={`${name} volume`} /></FaderColumn>
        <ButtonColumn>
          <Speaker><SpeakerIcon /></Speaker>
          <MiniButton $kind="mute">M</MiniButton>
          <MiniButton $kind={selected ? "soloOn" : "solo"}>S</MiniButton>
          <IconButton aria-label="Routing"><RouteIcon /></IconButton>
          <span>Route</span>
        </ButtonColumn>
      </StripMain>
      <StripName $selected={selected}>{name}</StripName>
      <StripNumber $selected={selected}>{n}</StripNumber>
    </Strip>
  );
}

const MasterButtons = styled(ButtonColumn)`
  width: 24px;
  height: 172px;
  padding-top: 1px;
`;

const TrimFoot = styled.div`
  display: flex;
  flex-direction: column;
  align-items: center;
  gap: 3px;
  margin-top: auto;
`;

function Master() {
  return (
    <Strip $wide>
      <StripTop $master><Fx tone="green" mixer /></StripTop>
      <MasterPan>
        <Knob r={10} id="master" />
        <MiniButton $kind="plain" aria-label="Mono">
          <Icon w={16} h={12}><circle cx="5.5" cy="6" r="4.3" strokeWidth="1.2" /><circle cx="10.5" cy="6" r="4.3" strokeWidth="1.2" /></Icon>
        </MiniButton>
      </MasterPan>
      <MasterMain>
        <MasterMeters>
          <MasterVolume>0.00dB</MasterVolume>
          <PeakRow><span>-inf</span><span>-inf</span></PeakRow>
          <MeterGrid>
            <MeterScale $step={12}>{["2", "6", "0-", "6-", "2-", "8-", "24-", "30-", "36-", "42-"].map((t, i) => <span key={i}>{t}</span>)}</MeterScale>
            <MeterScale $step={25}>{["-6-", "-18-", "-30-", "-42-", "-54-"].map((t) => <span key={t}>{t}</span>)}</MeterScale>
            <MeterScale $step={12}>{["12", "6", "-0", "-6", "-12", "-18", "-24", "-30", "-36", "-42"].map((t) => <span key={t}>{t}</span>)}</MeterScale>
          </MeterGrid>
          <RmsRow><span>RMS</span><span>-inf</span></RmsRow>
        </MasterMeters>
        <MasterFader><Fader $length={133} type="range" defaultValue={75} aria-label="Master volume" /></MasterFader>
        <MasterButtons>
          <MiniButton $kind="mute">M</MiniButton>
          <MiniButton $kind="solo">S</MiniButton>
          <IconButton aria-label="Routing"><RouteIcon vivid /></IconButton>
          <span>Route</span>
          <TrimFoot>
            <IconButton aria-label="Trim envelope">
              <svg width="20" height="20" viewBox="0 0 20 20" aria-hidden="true">
                <path d="M5 0.5 H19.5 V19.5 H0.5 V6 Z" fill="#4c4e4e" stroke="#666" />
                <path d="M4 13 L10 7.5 L16 13" fill="none" stroke="#1d1d1d" strokeWidth="1.3" />
                <path d="M3 12h3v3h-3z M8.5 6h3v3h-3z M14 12h3v3h-3z" fill="#1d1d1d" />
              </svg>
            </IconButton>
            <span>trim</span>
          </TrimFoot>
        </MasterButtons>
      </MasterMain>
      <MasterFoot>
        <Icon w={11} h={18}><circle cx="1" cy="9" r="8" strokeWidth="1.2" /><path d="M0 7.5 H2 V13 M0 13 H4 M1 4 V5.5" strokeWidth="1.3" /></Icon>
        <span>MASTER</span>
      </MasterFoot>
    </Strip>
  );
}

function Param({ label, value, unit, pos, filter }: { label: string; value: string; unit: string; pos: number; filter?: boolean }) {
  const id = label.replace(/\W/g, "");
  return (
    <ParamRow $filter={filter}>
      <label htmlFor={id}>{label}</label>
      <HSlider id={id} type="range" max={1000} defaultValue={pos} />
      <Field $width={filter ? 58 : 44} defaultValue={value} aria-label={`${label} value`} />
      <Unit>{unit}</Unit>
    </ParamRow>
  );
}

const envelope = [
  { label: "Pre-open:", value: "0", unit: "ms", pos: 0 },
  { label: "Attack:", value: "3", unit: "ms", pos: 106 },
  { label: "Hold:", value: "0", unit: "ms", pos: 0 },
  { label: "Release:", value: "100", unit: "ms", pos: 274 },
  { label: "Hysteresis:", value: "+0.0", unit: "dB", pos: 720 },
];

const filters = [
  { label: "Lowpass", value: "20000", unit: "Hz", pos: 1000 },
  { label: "Highpass", value: "0", unit: "Hz", pos: 0 },
  { label: "RMS size", value: "0", unit: "ms", pos: 0 },
];

const mixes = [
  { label: "Wet:", value: "+0.0", pos: 716 },
  { label: "Dry:", value: "-inf", pos: 0 },
  { label: "Noise:", value: "-inf", pos: 0 },
];

const meterMarks = ["-0-", "-6-", "-12-", "-18-", "-24-", "-30-", "-36-", "-42-", "-48-", "-54-", "-60-"];

function EffectsWindow() {
  return (
    <Window aria-label="FX: Master Track">
      <TitleBar>
        <WindowTitle>FX: Master Track</WindowTitle>
        <PinButton aria-label="Pin window">
          <Icon w={16} h={18}><path d="M4 1.5 H12 M5.5 1.5 V7 Q2 8 1.5 10.5 H14.5 Q14 8 10.5 7 V1.5 M8 4 V7 M8 10.5 V17" strokeWidth="1" /></Icon>
        </PinButton>
        <CloseButton aria-label="Close"><Icon size={8}><path d="M1 1 L7 7 M7 1 L1 7" strokeWidth="1.8" /></Icon></CloseButton>
      </TitleBar>
      <MenuBar><MenuItem>FX</MenuItem><MenuItem>Edit</MenuItem><MenuItem>Options</MenuItem></MenuBar>
      <WindowBody>
        <ChainColumn>
          <ChainList>
            <ChainItem>
              <Tick $heavy type="checkbox" id="reagate" defaultChecked />
              <ChainName htmlFor="reagate">VST: ReaGate (Cockos)</ChainName>
            </ChainItem>
          </ChainList>
          <ButtonRow>
            <PushButton $width={58} $tall>Add</PushButton>
            <PushButton $width={64} $tall>Remove</PushButton>
          </ButtonRow>
          <Small>0.0%/0.0% CPU 0/0 spls</Small>
        </ChainColumn>
        <EffectColumn>
          <CommentRow>
            <Field aria-label="Comment" />
            <PushButton $width={24}>...</PushButton>
          </CommentRow>
          <PresetRow>
            <SelectBox $width={360}>
              <Select aria-label="Preset"><option>No preset</option></Select>
              <ChevronDown />
            </SelectBox>
            <PresetButtons>
              <PushButton $width={22}>+</PushButton>
              <PushButton $width={58}>Param</PushButton>
              <PushButton $width={98}>2/4 in 2 out</PushButton>
              <PushButton $width={32}>UI</PushButton>
            </PresetButtons>
            <PresetEnd>
              <svg width="24" height="24" viewBox="0 0 24 24" aria-hidden="true">
                <circle cx="12" cy="14" r="11" fill="#bcbcbc" />
                <circle cx="12" cy="12" r="11" fill="#f0f0f0" stroke="#8e8e8e" strokeWidth="1.3" />
                <path d="M13 13 L16 19.5" stroke="#111" strokeWidth="1.4" />
              </svg>
              <Tick type="checkbox" defaultChecked aria-label="Effect enabled" />
            </PresetEnd>
          </PresetRow>
          <Groups>
            <Group $width={460} $height={375}>
              <Legend>ReaGate</Legend>
              <GateTop>
                <Threshold>
                  <ThresholdMeter>
                    <GreenLamp />
                    <VSlider $length={278} $mark={84} $wide={24} type="range" defaultValue={0} aria-label="Threshold" />
                    <GreenLamp />
                  </ThresholdMeter>
                  <UnitRow><Field $width={44} $centered defaultValue="-inf" aria-label="Threshold value" /><Unit>dB</Unit></UnitRow>
                </Threshold>
                <GateControls>
                  <Group $width={378} $height={185}>
                    <Legend>Envelope</Legend>
                    <EnvelopeRows>
                      {envelope.map((p) => <Param key={p.label} {...p} />)}
                    </EnvelopeRows>
                  </Group>
                  <DetectorRow>
                    <label htmlFor="detector">Detector input:</label>
                    <SelectBox $width={234}>
                      <Select id="detector"><option>Main Inputs</option></Select>
                      <ChevronDown />
                    </SelectBox>
                  </DetectorRow>
                  {filters.map((p) => <Param key={p.label} {...p} filter />)}
                </GateControls>
              </GateTop>
              <MidiRow>
                <TickLabel><Tick type="checkbox" />Send MIDI on open/close, note:</TickLabel>
                <MidiNote>
                  <Field $width={42} defaultValue="69" aria-label="Note" />
                  <MidiChannel>
                    <label htmlFor="channel">, channel:</label>
                    <Field $width={42} id="channel" defaultValue="1" />
                  </MidiChannel>
                </MidiNote>
              </MidiRow>
            </Group>
            <Group $width={193} $height={331}>
              <Legend $small>Output mix</Legend>
              <MixBody>
                <OutputMeter>
                  <MeterPeak>-inf</MeterPeak>
                  {meterMarks.map((t, i) => <MeterMark key={t} $fade={1 - i * 0.06}>{t}</MeterMark>)}
                </OutputMeter>
                <MixSliders>
                  {mixes.map((m) => (
                    <MixSlider key={m.label}>
                      <label htmlFor={m.label}>{m.label}</label>
                      <VSlider $length={200} $mark={61} $wide={25} id={m.label} type="range" max={1000} defaultValue={m.pos} />
                      <Field $width={44} $centered defaultValue={m.value} aria-label={`${m.label} value`} />
                    </MixSlider>
                  ))}
                </MixSliders>
              </MixBody>
              <MixChecks>
                <TickLabel><Tick type="checkbox" />Preview filter output</TickLabel>
                <TickLabel><Tick type="checkbox" />Invert gate (duck)</TickLabel>
              </MixChecks>
            </Group>
          </Groups>
        </EffectColumn>
      </WindowBody>
    </Window>
  );
}

export default function App() {
  return (
    <Page>
      <GlobalStyle />
      <Upper>
        <TrackColumn>
          <Toolbar>
            {tools.map((t) => <ToolButton key={t.name} $on={t.on} aria-label={t.name}><Icon>{t.art}</Icon></ToolButton>)}
          </Toolbar>
          <Track n={1} name="Amb_Sound_TrashTin" selected />
          <Track n={2} name="Slide_Door_01" />
          <StatusLine>mb_Sound_TrashTin.WAV [start] 1.1.00 [end] 36.3.19 [len] 35.2.19</StatusLine>
        </TrackColumn>
        <ArrangeColumn>
          <RegionBar />
          <Ruler>
            {[0, 1, 2, 3, 4, 5, 6].map((i) => (
              <RulerCell key={i}>
                <BarLabel>{i + 1}.1.00</BarLabel>
                <TimeLabel>0:{String(i * 2).padStart(2, "0")}.000</TimeLabel>
              </RulerCell>
            ))}
          </Ruler>
          <ArrangeRow>
            <Canvas>
              <Clip>
                <ClipTitle>Amb_Sound_TrashTin.WAV</ClipTitle>
                <OfflineRow>
                  {Array.from({ length: 25 }, (_, i) => <OfflineCell key={i}>{i < 24 ? "OFFLINE" : "OFFLI..."}</OfflineCell>)}
                </OfflineRow>
              </Clip>
              <Clip $muted><ClipTitle $muted>Slide_Door_01.WAV</ClipTitle></Clip>
              <BeatLines $dotted />
              <BeatLines />
              <BarLines />
            </Canvas>
            <VScroll />
          </ArrangeRow>
          <HScroll>
            <ScrollButton aria-label="Scroll left"><Icon size={8}><path d="M6.5 0.5 V7.5 L1 4 Z" fill="currentColor" stroke="none" /></Icon></ScrollButton>
            <ScrollThumb />
            <ScrollButton aria-label="Scroll right"><Icon size={8}><path d="M1.5 0.5 V7.5 L7 4 Z" fill="currentColor" stroke="none" /></Icon></ScrollButton>
            <PlainButton aria-label="Zoom in"><Icon size={12}><path d="M6 0.5 V11.5 M0.5 6 H11.5" strokeWidth="3.5" /></Icon></PlainButton>
            <PlainButton $apart aria-label="Zoom out"><Icon size={12}><path d="M0.5 6 H11.5" strokeWidth="3.5" /></Icon></PlainButton>
          </HScroll>
          <PlayCursor />
        </ArrangeColumn>
      </Upper>

      <Transport>
        <Pill $cut>
          <PillButton aria-label="Go to start"><Icon size={12}><path d="M2 1 V11" strokeWidth="2" /><path d="M11 1 V11 L4 6 Z" fill="currentColor" stroke="none" /></Icon></PillButton>
          <PillButton aria-label="Go to end"><Icon size={12}><path d="M10 1 V11" strokeWidth="2" /><path d="M1 1 V11 L8 6 Z" fill="currentColor" stroke="none" /></Icon></PillButton>
        </Pill>
        <RoundRecord $size={30} aria-label="Record" />
        <PlayButton aria-label="Play"><Icon size={14}><path d="M2 1 L13 7 L2 13 Z" fill="currentColor" stroke="none" /></Icon></PlayButton>
        <LoopButton aria-label="Repeat"><Icon size={14}><path d="M4 3 A5 5 0 0 0 5 11.6 M10 11 A5 5 0 0 0 9 2.4" strokeWidth="2" /><path d="M1.5 2 H6.5 V6.5 Z M12.5 12 H7.5 V7.5 Z" fill="currentColor" stroke="none" /></Icon></LoopButton>
        <Pill>
          <PillButton aria-label="Stop"><Icon size={10}><rect x="1" y="1" width="9" height="9" fill="currentColor" stroke="none" /></Icon></PillButton>
          <PillButton aria-label="Pause"><Icon size={10}><path d="M2.5 0.5 V9.5 M7.5 0.5 V9.5" strokeWidth="2.4" /></Icon></PillButton>
        </Pill>
        <TimeDisplay>1.1.00 / 0:00.000</TimeDisplay>
        <TransportEnd>
          <ClippedLabel>0:00.000</ClippedLabel>
          <InfoBox $width={50}><span>BPM</span><span>120</span></InfoBox>
          <InfoBox $width={38}>4/4</InfoBox>
          <InfoBox $width={54}>
            <Inline><Icon w={13} h={12}><EnvelopePath /></Icon><GlobalLabel>GLOBAL</GlobalLabel></Inline>
            <Inline>none<DropIcon /></Inline>
          </InfoBox>
          <RateKnob><Icon size={30}><circle cx="15" cy="15" r="14" stroke="#555" /><path d="M15 4 V14" stroke="#777" strokeWidth="1.2" /></Icon></RateKnob>
          <RateText><span>Rate:</span><span>1.0</span></RateText>
        </TransportEnd>
      </Transport>

      <Mixer>
        <Master />
        <MixerStrip n={1} name="Amb_Sound_Tr" volume="12.0" level={100} top="-inf" selected />
        <MixerStrip n={2} name="Slide_Door..01" volume="0.00" level={68} top={<SoloBadge>!S</SoloBadge>} />
      </Mixer>
      <TabBar>
        <MixerTab>
          <Icon size={9}><path d="M0.5 0.5 H8.5 V8.5 H0.5 Z M2 2 L7 7 M7 2 L2 7" strokeWidth="1" /></Icon>
          Mixer
        </MixerTab>
      </TabBar>
      <EffectsWindow />
    </Page>
  );
}
